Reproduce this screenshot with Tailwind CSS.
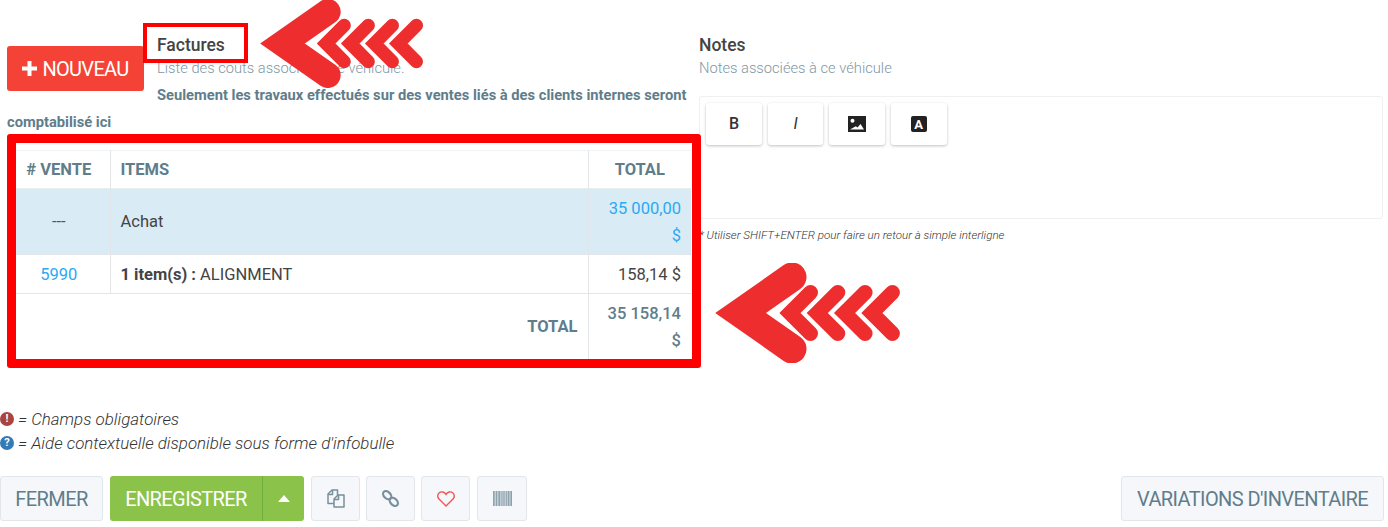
<!DOCTYPE html>
<html lang="fr">
<head>
<meta charset="utf-8">
<title>Factures</title>
<script src="https://cdn.jsdelivr.net/npm/@tailwindcss/browser@4"></script>
</head>
<body class="bg-white font-['Roboto',sans-serif] text-[#444]">
<div class="relative w-[1388px] h-[527px] overflow-hidden">

  <!-- Factures + Notes columns -->
  <div class="flex items-start pt-[33px]">
    <div class="w-[692px] shrink-0 pl-[7px]">
      <button class="float-left mt-[13px] mr-[13px] flex h-[45px] w-[137px] items-center justify-center gap-[5px] rounded-[3px] bg-[#f44336] text-[20px] tracking-[-0.7px] text-white">
        <svg class="w-[15px] h-[15px]" viewBox="0 0 15 15"><path d="M5.500 0h4v5.500H15v4H9.500V15h-4V9.500H0v-4h5.500z" fill="#fff"/></svg>
        NOUVEAU
      </button>
      <h3 class="text-[17.500px] leading-[24px] font-medium text-[#444]">Factures</h3>
      <p class="text-[14.700px] leading-[23px] font-light text-[#7f98a5]">Liste des couts associés à ce véhicule.</p>
      <p class="pt-[2px] text-[14.700px] leading-[27px] font-bold text-[#607d8b]">Seulement les travaux effectués sur des ventes liés à des clients internes seront comptabilisé ici</p>

      <div class="ml-[9px] mt-[8px] bg-white pt-[6px] clear-both">
        <table class="w-[675px] table-fixed border-collapse text-[16.500px] leading-[27px]">
          <thead>
            <tr class="border-y border-y-[#e8edf0] border-t-[#eff3f6] text-[#607d8b]">
              <th class="w-[94px] border-r border-[#e3e6e8] h-[38px] pr-[8px] text-center font-bold">#&nbsp;VENTE</th>
              <th class="border-r border-[#e3e6e8] px-[10px] text-left font-bold">ITEMS</th>
              <th class="w-[103px] px-[10px] text-center font-bold">TOTAL</th>
            </tr>
          </thead>
          <tbody>
            <tr class="border-b border-[#e3e6e8] bg-[#d9ebf5]">
              <td class="border-r border-[#e3e6e8] pr-[8px] text-center text-[#555]">---</td>
              <td class="border-r border-[#e3e6e8] px-[10px]">Achat</td>
              <td class="px-[10px] py-[5.500px] text-right text-[#2aa9f5]">35 000,00 $</td>
            </tr>
            <tr class="border-b border-[#e3e6e8]">
              <td class="border-r border-[#e3e6e8] pr-[8px] text-center text-[#2aa9f5]">5990</td>
              <td class="border-r border-[#e3e6e8] px-[10px] py-[5.500px]"><b class="font-bold">1 item(s) :</b> ALIGNMENT</td>
              <td class="px-[10px] text-right">158,14 $</td>
            </tr>
            <tr>
              <td colspan="2" class="border-r border-[#e3e6e8] px-[10px] text-right font-bold text-[#607d8b]">TOTAL</td>
              <td class="px-[10px] py-[5.500px] text-right font-medium text-[#607d8b]">35 158,14 $</td>
            </tr>
          </tbody>
        </table>
      </div>
    </div>

    <div class="ml-[7px] w-[684px]">
      <h3 class="text-[17.500px] leading-[24px] font-medium text-[#444]">Notes</h3>
      <p class="text-[14.700px] leading-[23px] font-light text-[#7f98a5]">Notes associées à ce véhicule</p>
      <div class="mt-[16px] h-[123px] rounded-[3px] border border-[#eef0f1] px-[6px] pt-[6px]">
        <div class="flex gap-[6px]">
          <button class="flex h-[42px] w-[56px] items-center justify-center rounded-[3px] bg-white text-[16px] font-medium text-[#333] shadow-[0_1px_3px_rgba(0,0,0,0.25)]">B</button>
          <button class="flex h-[42px] w-[55px] items-center justify-center rounded-[3px] bg-white text-[16px] italic text-[#333] shadow-[0_1px_3px_rgba(0,0,0,0.25)]">I</button>
          <button class="flex h-[42px] w-[56px] items-center justify-center rounded-[3px] bg-white shadow-[0_1px_3px_rgba(0,0,0,0.25)]">
            <svg class="w-[18px] h-[16px]" viewBox="0 0 18 16"><path fill="#222" fill-rule="evenodd" d="M0 0h18v16H0zM4.500 2.800a2 2 0 1 0 0 4a2 2 0 0 0 0-4zM2 13.500h14l-3.500-5.500-3 3.500-1.700-1.200z"/></svg>
          </button>
          <button class="flex h-[42px] w-[56px] items-center justify-center rounded-[3px] bg-white pr-[1px] shadow-[0_1px_3px_rgba(0,0,0,0.25)]">
            <span class="flex h-[16px] w-[16px] items-center justify-center rounded-[2px] bg-[#222] text-[13px] leading-none font-bold text-white">A</span>
          </button>
        </div>
      </div>
      <p class="pt-[7px] text-[11.600px] leading-[18px] font-light italic text-[#333]">* Utiliser SHIFT+ENTER pour faire un retour à simple interligne</p>
    </div>
  </div>

  <!-- legend -->
  <div class="mt-[48px] text-[16.900px] leading-[24px] font-light italic text-[#333]">
    <p class="flex items-center gap-[4px]"><span class="flex h-[14px] w-[14px] items-center justify-center rounded-full bg-[#a94442] text-[11px] font-bold not-italic text-white">!</span>= Champs obligatoires</p>
    <p class="flex items-center gap-[4px]"><span class="flex h-[14px] w-[14px] items-center justify-center rounded-full bg-[#337ab7] text-[11px] font-bold not-italic text-white">?</span>= Aide contextuelle disponible sous forme d'infobulle</p>
  </div>

  <!-- action bar -->
  <div class="mt-[21px] flex h-[45px] items-stretch text-[20px] tracking-[-0.600px]">
    <button class="w-[103px] rounded-[3px] border border-[#e1e6ea] bg-[#f5f7fa] text-[#607d8b]">FERMER</button>
    <div class="ml-[7px] flex w-[194px] rounded-[3px] bg-[#8bc34a] text-white">
      <button class="w-[153px] border-r border-[#6fae3f]">ENREGISTRER</button>
      <button class="flex flex-1 items-center justify-center">
        <svg class="w-[12px] h-[7px]" viewBox="0 0 12 7"><path d="M6 0l6 7H0z" fill="#fff"/></svg>
      </button>
    </div>
    <button class="ml-[7px] flex w-[49px] items-center justify-center rounded-[3px] border border-[#e1e6ea] bg-[#f5f7fa]">
      <svg class="w-[18px] h-[19px]" viewBox="0 0 18 19" fill="none" stroke="#78909c" stroke-width="1.500" stroke-linejoin="round"><path d="M7 14.500H1V5l4-4h5.500v5"/><path d="M7 18V10l4-4h6v12z"/><path d="M1 5.500h4.500V1M7 10.500h4.500V6"/></svg>
    </button>
    <button class="ml-[6px] flex w-[49px] items-center justify-center rounded-[3px] border border-[#e1e6ea] bg-[#f5f7fa]">
      <svg class="w-[17px] h-[17px]" viewBox="0 0 18 18" fill="none" stroke="#78909c" stroke-width="2.300"><ellipse cx="5.500" cy="5.500" rx="5" ry="3.500" transform="rotate(45 5.500 5.500)"/><ellipse cx="12.500" cy="12.500" rx="5" ry="3.500" transform="rotate(45 12.500 12.500)"/></svg>
    </button>
    <button class="ml-[6px] flex w-[49px] items-center justify-center rounded-[3px] border border-[#e1e6ea] bg-[#f5f7fa]">
      <svg class="w-[18px] h-[16px]" viewBox="0 0 18 16" fill="none" stroke="#ef5350" stroke-width="1.400"><path d="M9 15L2 8C.2 6.200.4 3.200 2.300 1.700 4.300.2 7.500.8 9 3.300 10.500.8 13.700.2 15.700 1.700 17.600 3.200 17.800 6.200 16 8z"/></svg>
    </button>
    <button class="ml-[7px] flex w-[50px] items-center justify-center rounded-[3px] border border-[#e1e6ea] bg-[#f5f7fa]">
      <svg class="w-[19px] h-[15px]" viewBox="0 0 19 15"><rect width="19" height="15" fill="#c3ced4"/><path fill="#8fa3ae" d="M0 0h1.500v15H0zM3 0h1v15H3zM5.500 0h1.500v15H5.500zM8.500 0h.8v15h-.8zM10.500 0h1v15h-1zM13 0h.8v15H13zM15 0h1.200v15H15zM17.500 0h1.500v15h-1.500z"/></svg>
    </button>
    <button class="ml-auto mr-[4px] w-[263px] rounded-[3px] border border-[#e1e6ea] bg-[#f5f7fa] text-[#607d8b]">VARIATIONS D'INVENTAIRE</button>
  </div>

  <!-- red annotations drawn over the screenshot -->
  <div class="absolute left-[7px] top-[134px] h-[234px] w-[694px] rounded-[3px] border-[9px] border-[#ff0000]"></div>
  <div class="absolute left-[143px] top-[23px] h-[40px] w-[105px] border-[4px] border-[#ff0000]"></div>
  <svg class="absolute left-[260px] top-[-1px] h-[89px] w-[164px]" viewBox="0 0 186 100" fill="none" stroke="#ee2e2e" stroke-linecap="round">
    <path stroke-width="29" d="M77 14L25.500 50 77 86"/>
    <path stroke-width="15" d="M95.500 29.500L75 50l20.500 20.500M122.800 29.500L102.300 50l20.500 20.500M150.100 29.500L129.600 50l20.500 20.500M177.400 29.500L156.900 50l20.500 20.500"/>
  </svg>
  <svg class="absolute left-[715px] top-[263px] h-[100px] w-[186px]" viewBox="0 0 186 100" fill="none" stroke="#ee2e2e" stroke-linecap="round">
    <path stroke-width="29" d="M77 14L25.500 50 77 86"/>
    <path stroke-width="15" d="M95.500 29.500L75 50l20.500 20.500M122.800 29.500L102.300 50l20.500 20.500M150.100 29.500L129.600 50l20.500 20.500M177.400 29.500L156.900 50l20.500 20.500"/>
  </svg>
</div>
</body>
</html>
